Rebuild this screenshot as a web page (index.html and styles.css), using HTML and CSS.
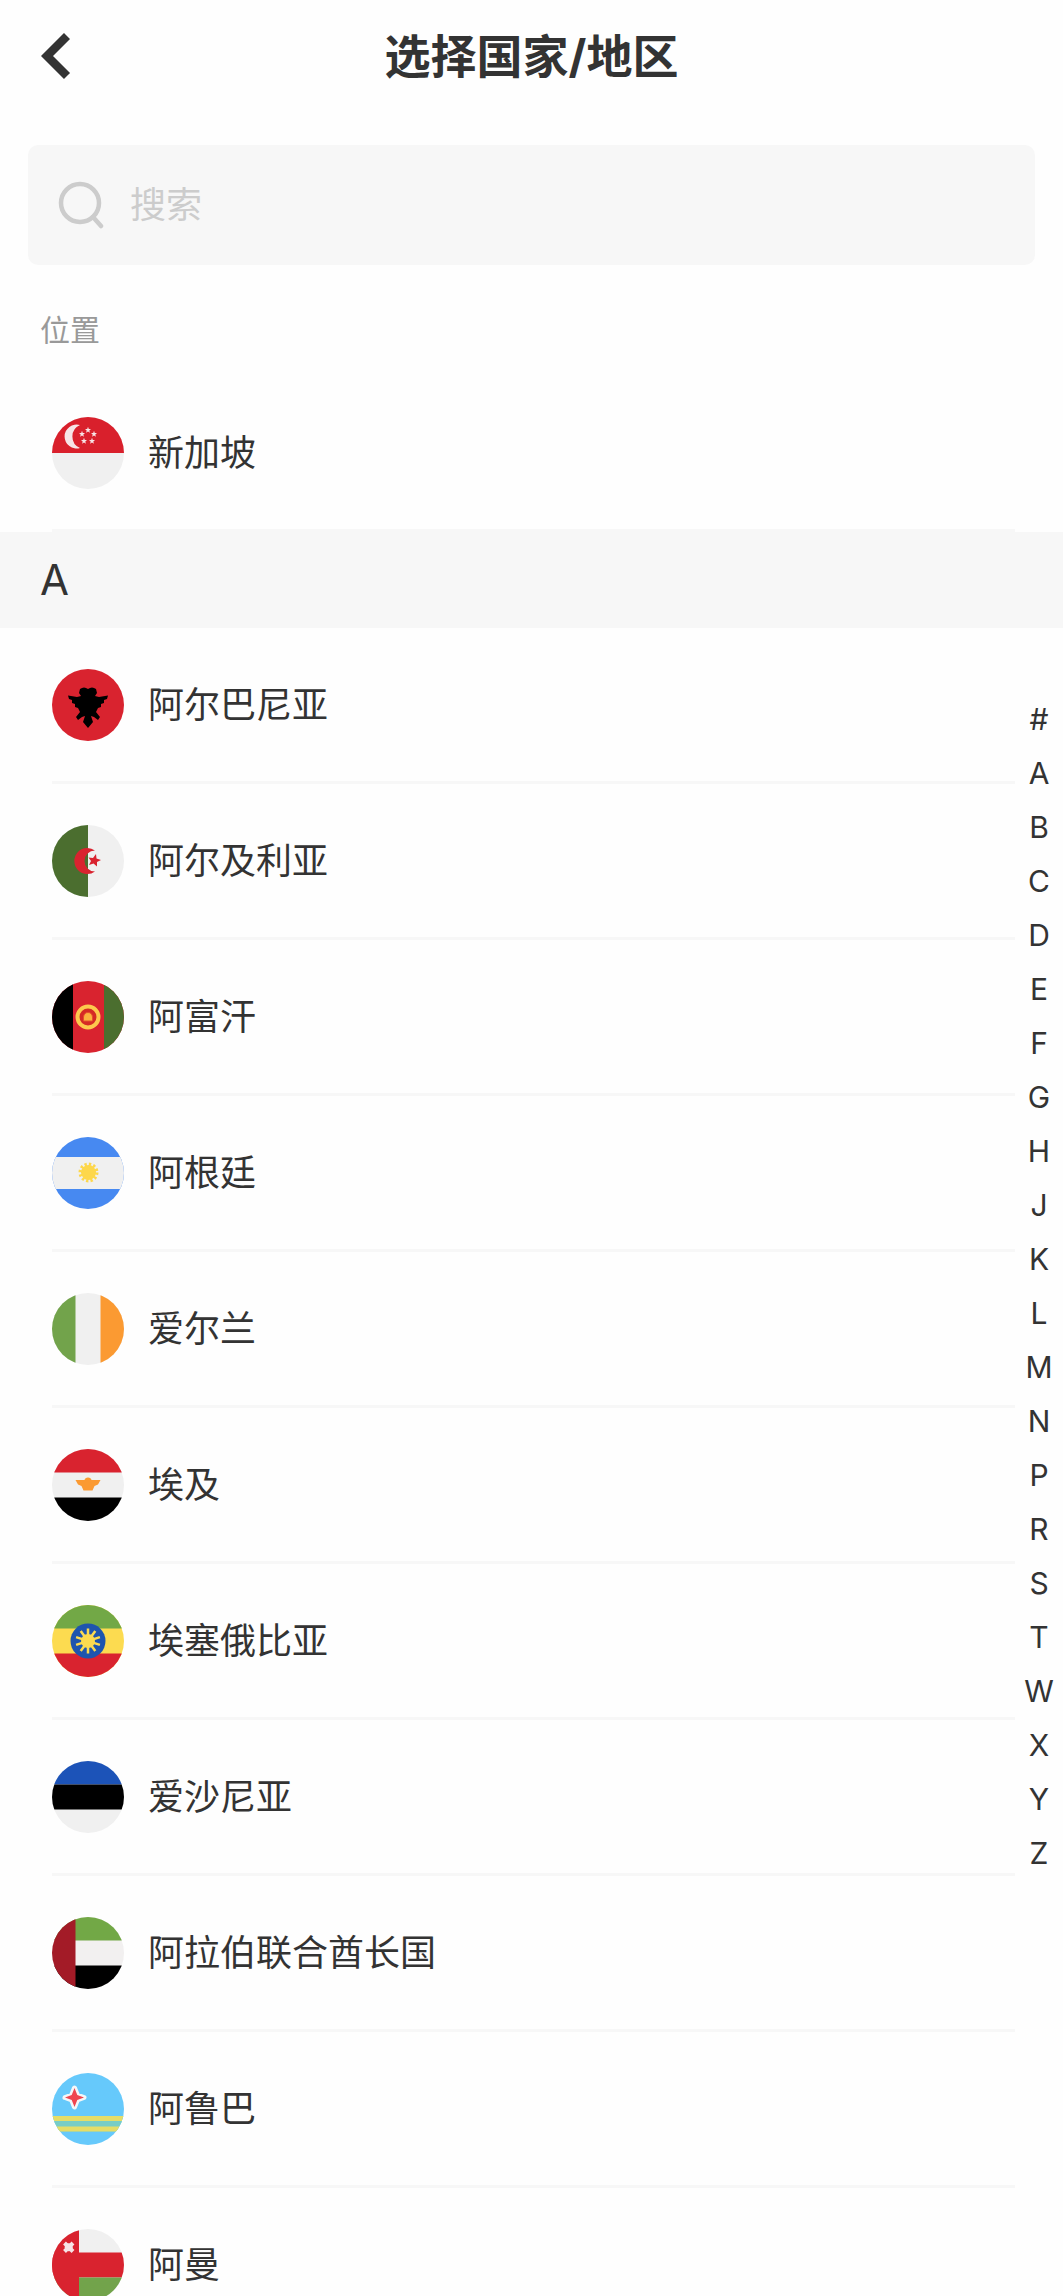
FILE: index.html
```
<!DOCTYPE html>
<html lang="zh-CN">
<head>
    <meta charset="UTF-8">
    <meta name="viewport" content="width=device-width, initial-scale=1.0">
    <title>选择国家/地区</title>
    <link rel="stylesheet" href="styles.css">
</head>
<body>
    <div class="page">
        <header class="header">
            <button class="back" type="button" aria-label="返回">
                <svg width="30" height="46" viewBox="0 0 30 46"><path d="M26 3 L6 23 L26 43" fill="none" stroke="#333" stroke-width="8.5"/></svg>
            </button>
            <h1>选择国家/地区</h1>
        </header>

        <div class="search-wrap">
            <label class="search">
                <svg class="search-icon" width="46" height="48" viewBox="0 0 46 48">
                    <g fill="none" stroke="#ccc" stroke-width="4.5"><circle cx="22" cy="22" r="19"/><path d="M35 36 L43 45" stroke-linecap="round"/></g>
                </svg>
                <input type="text" placeholder="搜索" aria-label="搜索">
            </label>
        </div>

        <div class="content">
            <div class="list">
                <h2 class="location">位置</h2>
                <ul class="countries">
                    <li><button type="button">
                        <svg class="flag" viewBox="0 0 72 72">
                            <rect width="72" height="72" fill="#f0f0f0"/><rect width="72" height="36" fill="#d9202c"/>
                            <path d="M28 8 A12 12 0 1 0 28 31 A12.500 12.500 0 0 1 28 8" fill="#f7e4e6"/>
                            <g fill="#f7e4e6">
                                <path id="star" d="M36 9.800 L36.800 12 L39 12.100 L37.300 13.500 L37.900 15.700 L36 14.400 L34.100 15.700 L34.700 13.500 L33 12.100 L35.200 12 Z"/>
                                <use href="#star" x="-6" y="4"/><use href="#star" x="6" y="4"/>
                                <use href="#star" x="-4" y="11"/><use href="#star" x="4" y="11"/>
                            </g>
                        </svg>新加坡</button></li>
                </ul>

                <h2 class="letter" id="A">A</h2>
                <ul class="countries">
                    <li><button type="button">
                        <svg class="flag" viewBox="0 0 72 72">
                            <rect width="72" height="72" fill="#d9232f"/>
                            <path d="M28 20 Q32 17 36 20 Q40 17 44 20 L45 24 L43 27 L47 28 L56 26.500 L55 30 L52 31 L52 34 L49 35 L49 38 L46 39 L44 43 L48 48 L46 51 L42 48 L39 47 L41 53 L36 59 L31 53 L33 47 L30 48 L26 51 L24 48 L28 43 L26 39 L23 38 L23 35 L20 34 L20 31 L17 30 L16 26.500 L25 28 L29 27 L27 24 Z"/>
                        </svg>阿尔巴尼亚</button></li>
                    <li><button type="button">
                        <svg class="flag" viewBox="0 0 72 72">
                            <rect width="72" height="72" fill="#f0f0f0"/><rect width="36" height="72" fill="#4b6e2f"/>
                            <path d="M43 25.500 A13 13 0 1 0 43 46.500 A10.500 10.500 0 1 1 43 25.500" fill="#d9232f"/>
                            <path d="M44 29 L44.500 33.500 L49 35 L45 37 L45 41.500 L41.500 38.500 L37 40 L39 36 L36.500 32.500 L41 33 Z" fill="#d9232f"/>
                        </svg>阿尔及利亚</button></li>
                    <li><button type="button">
                        <svg class="flag" viewBox="0 0 72 72">
                            <rect width="72" height="72" fill="#d9232f"/><rect width="21" height="72"/><rect x="52" width="20" height="72" fill="#4b6e2f"/>
                            <circle cx="36" cy="36" r="10.500" fill="#d52b25" stroke="#fdc94d" stroke-width="4"/>
                            <path d="M31.500 40 V36 Q32 31.500 36 31.500 Q40 31.500 40.500 36 V40 Z" fill="#fbb33e" stroke="#e5502c"/>
                        </svg>阿富汗</button></li>
                    <li><button type="button">
                        <svg class="flag" viewBox="0 0 72 72">
                            <rect width="72" height="72" fill="#4789f1"/><rect y="20" width="72" height="32" fill="#f0f0f0"/>
                            <circle cx="36.500" cy="35.500" r="7.500" fill="#fdd74b"/>
                            <circle cx="36.500" cy="35.500" r="8" fill="none" stroke="#fdd74b" stroke-width="4" stroke-dasharray="2.200 2"/>
                        </svg>阿根廷</button></li>
                    <li><button type="button">
                        <svg class="flag" viewBox="0 0 72 72">
                            <rect width="72" height="72" fill="#f0f0f0"/><rect width="23.500" height="72" fill="#72a34b"/><rect x="48.500" width="23.500" height="72" fill="#fb9a32"/>
                        </svg>爱尔兰</button></li>
                    <li><button type="button">
                        <svg class="flag" viewBox="0 0 72 72">
                            <rect width="72" height="72" fill="#f0f0f0"/><rect width="72" height="23.500" fill="#d9232f"/><rect y="48.500" width="72" height="23.500"/>
                            <path d="M23.500 31 H32.500 Q33 28.500 36 28.500 Q39 28.500 39.500 31 H48.500 L46 35.500 L42.500 37 L40.500 41.500 H31.500 L29.500 37 L26 35.500 Z" fill="#fb9a32"/>
                        </svg>埃及</button></li>
                    <li><button type="button">
                        <svg class="flag" viewBox="0 0 72 72">
                            <rect width="72" height="72" fill="#fcdb50"/><rect width="72" height="23.500" fill="#72a846"/><rect y="48.500" width="72" height="23.500" fill="#d9232f"/>
                            <circle cx="36" cy="36" r="17.500" fill="#1e55ae"/>
                            <circle cx="36" cy="36" r="7" fill="#fcdb50"/>
                            <path d="M36 23.500 V48.500 M28.700 25.900 L43.300 46.100 M24.100 32.100 L47.900 39.900 M24.100 39.900 L47.900 32.100 M28.700 46.100 L43.300 25.900" stroke="#fcdb50" stroke-width="2.500"/>
                        </svg>埃塞俄比亚</button></li>
                    <li><button type="button">
                        <svg class="flag" viewBox="0 0 72 72">
                            <rect width="72" height="72" fill="#f0f0f0"/><rect width="72" height="23.500" fill="#1c53b8"/><rect y="23.500" width="72" height="25"/>
                        </svg>爱沙尼亚</button></li>
                    <li><button type="button">
                        <svg class="flag" viewBox="0 0 72 72">
                            <rect width="72" height="72" fill="#f2f0f0"/><rect width="72" height="23.500" fill="#72a846"/><rect y="48.500" width="72" height="23.500"/><rect width="23.500" height="72" fill="#a31b27"/>
                        </svg>阿拉伯联合酋长国</button></li>
                    <li><button type="button">
                        <svg class="flag" viewBox="0 0 72 72">
                            <rect width="72" height="72" fill="#66c9fb"/><rect y="43" width="72" height="15.500" fill="#78cdc6"/>
                            <rect y="43" width="72" height="5" fill="#e5dd68"/><rect y="53.500" width="72" height="5" fill="#e5dd68"/>
                            <path d="M22.500 15 L25.300 22 L32 24.500 L25.300 27 L22.500 34 L19.700 27 L13 24.500 L19.700 22 Z" fill="#ef4550" stroke="#f4f6f8" stroke-width="5" stroke-linejoin="round" paint-order="stroke"/>
                        </svg>阿鲁巴</button></li>
                    <li><button type="button">
                        <svg class="flag" viewBox="0 0 72 72">
                            <rect width="72" height="72" fill="#f0f0f0"/><rect y="23.500" width="72" height="25" fill="#d9232f"/><rect y="48.500" width="72" height="23.500" fill="#72a34b"/><rect width="27" height="72" fill="#d9232f"/>
                            <path d="M12.500 14 L21 22.500 M21 14 L12.500 22.500" stroke="#f7e4e6" stroke-width="4"/><circle cx="16.700" cy="18.200" r="4" fill="#f7e4e6"/>
                        </svg>阿曼</button></li>
                </ul>
            </div>

            <nav class="index">
                <a href="#">#</a>
                <a href="#A">A</a>
                <a href="#B">B</a>
                <a href="#C">C</a>
                <a href="#D">D</a>
                <a href="#E">E</a>
                <a href="#F">F</a>
                <a href="#G">G</a>
                <a href="#H">H</a>
                <a href="#J">J</a>
                <a href="#K">K</a>
                <a href="#L">L</a>
                <a href="#M">M</a>
                <a href="#N">N</a>
                <a href="#P">P</a>
                <a href="#R">R</a>
                <a href="#S">S</a>
                <a href="#T">T</a>
                <a href="#W">W</a>
                <a href="#X">X</a>
                <a href="#Y">Y</a>
                <a href="#Z">Z</a>
            </nav>
        </div>
    </div>
</body>
</html>
```
FILE: styles.css
```
* {
    box-sizing: border-box;
}
body {
    margin: 0;
    font-family: Inter, "Noto Sans CJK SC", sans-serif;
    background: #fefefe;
    color: #333;
}
button {
    padding: 0;
    border: none;
    background: none;
    font: inherit;
    color: inherit;
    cursor: pointer;
}
h1, h2 {
    margin: 0;
}
.page {
    display: flex;
    flex-direction: column;
    height: 100vh;
}

/* title bar */
.header {
    display: grid;
    grid-template-columns: 72px 1fr 72px;
    align-items: center;
    height: 112px;
}
.back {
    display: flex;
    padding-left: 41px;
}
.header h1 {
    font-size: 46px;
    line-height: 60px;
    text-align: center;
}

/* search */
.search-wrap {
    padding: 33px 28px 11px;
}
.search {
    display: flex;
    align-items: center;
    gap: 26px;
    height: 120px;
    padding: 0 30px;
    border-radius: 10px;
    background: #f7f7f7;
}
.search input {
    flex: 1;
    height: 60px;
    padding: 0;
    border: none;
    outline: none;
    background: none;
    font: inherit;
    font-size: 36px;
    line-height: 60px;
    color: #333;
}
.search input::placeholder {
    color: #ccc;
}

/* country list */
.content {
    position: relative;
    flex: 1;
    min-height: 0;
}
.list {
    height: 100%;
    overflow-y: auto;
    scrollbar-width: none;
}
.location {
    padding: 39px 40px 31px;
    font-size: 30px;
    font-weight: 400;
    line-height: 30px;
    color: #999;
}
.letter {
    padding: 0 40px;
    background: #f7f7f7;
    font-size: 42px;
    font-weight: 400;
    line-height: 96px;
}
.countries {
    margin: 0;
    padding: 0 48px 0 52px;
    list-style: none;
}
.countries li {
    border-bottom: 3px solid #f7f7f7;
}
.countries button {
    display: flex;
    align-items: center;
    gap: 24px;
    width: 100%;
    height: 153px;
    font-size: 36px;
    line-height: 60px;
    text-align: left;
}
.flag {
    width: 72px;
    height: 72px;
    border-radius: 50%;
}

/* letter index on the right edge */
.index {
    position: absolute;
    top: 0;
    right: 0;
    bottom: 0;
    display: flex;
    flex-direction: column;
    justify-content: center;
    width: 48px;
}
.index a {
    font-size: 30px;
    line-height: 54px;
    text-align: center;
    text-decoration: none;
    color: #333;
}
```
